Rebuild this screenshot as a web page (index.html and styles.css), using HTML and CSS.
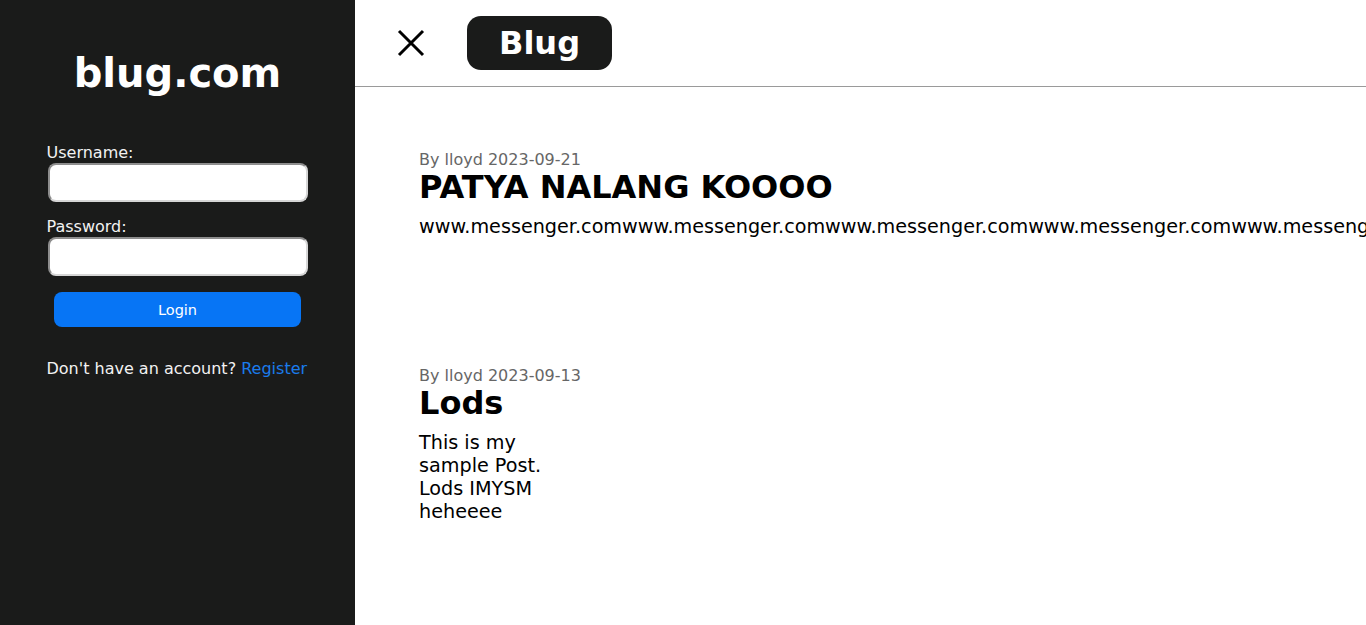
FILE: index.html
```html
<!DOCTYPE html>
<html lang="en">
<head>
<meta charset="utf-8">
<title>Blug</title>
<link rel="stylesheet" href="styles.css">
</head>
<body>
<div class="layout">
  <aside class="sidebar">
    <h1 class="brand">blug.com</h1>
    <form class="login-form">
      <label class="field-label" for="username">Username:</label>
      <input class="field-input" id="username" type="text">
      <label class="field-label gap-top" for="password">Password:</label>
      <input class="field-input" id="password" type="password">
      <button class="login-btn" type="button">Login</button>
      <p class="register">Don't have an account? <a class="register-link" href="#">Register</a></p>
    </form>
  </aside>
  <main class="main">
    <header class="topbar">
      <button class="close-btn" type="button" aria-label="Close">
        <svg width="28" height="28" viewBox="0 0 28 28"><path d="M2 2 L26 26 M26 2 L2 26" stroke="#000" stroke-width="3" fill="none"/></svg>
      </button>
      <div class="logo-pill">Blug</div>
    </header>
    <section class="posts">
      <article class="post">
        <div class="post-meta">By lloyd 2023-09-21</div>
        <h2 class="post-title">PATYA NALANG KOOOO</h2>
        <p class="post-body">www.messenger.comwww.messenger.comwww.messenger.comwww.messenger.comwww.messenger.com</p>
      </article>
      <article class="post post-next">
        <div class="post-meta">By lloyd 2023-09-13</div>
        <h2 class="post-title">Lods</h2>
        <p class="post-body narrow">This is my sample Post. Lods IMYSM heheeee</p>
      </article>
    </section>
  </main>
</div>
</body>
</html>
```
FILE: styles.css
```css
html, body {
  margin: 0;
  padding: 0;
  height: 100%;
  overflow: hidden;
  background: #ffffff;
  font-family: "DejaVu Sans", "Liberation Sans", sans-serif;
}

.layout {
  display: flex;
  height: 100vh;
}

.sidebar {
  width: 355px;
  flex: 0 0 355px;
  background: #1a1b1a;
  color: #f2f2f2;
  display: flex;
  flex-direction: column;
  align-items: center;
}

.brand {
  margin: 50px 0 0;
  font-size: 40px;
  line-height: 47px;
  font-weight: bold;
  color: #ffffff;
}

.login-form {
  width: 260px;
  margin-top: 46px;
  display: flex;
  flex-direction: column;
}

.field-label {
  font-size: 16px;
  line-height: 20px;
  color: #f2f2f2;
  margin-left: -1px;
}

.gap-top {
  margin-top: 15px;
}

.field-input {
  box-sizing: border-box;
  width: 260px;
  height: 39px;
  margin: 0;
  padding: 0 8px;
  background: #ffffff;
  border: 2px solid;
  border-color: #8e8e8e #d6d6d6 #d6d6d6 #8e8e8e;
  border-radius: 8px;
  font-size: 16px;
  font-family: inherit;
}

.login-btn {
  align-self: center;
  width: 247px;
  height: 35px;
  margin-top: 16px;
  border: none;
  border-radius: 8px;
  background: #0775f5;
  color: #ffffff;
  font-family: inherit;
  font-size: 14.5px;
  padding: 0;
}

.register {
  margin: 32px 0 0 -1px;
  font-size: 16px;
  line-height: 19px;
  color: #f2f2f2;
  white-space: nowrap;
}

.register-link {
  color: #1a7bec;
  text-decoration: none;
}

.main {
  flex: 1;
  min-width: 0;
  overflow: hidden;
  display: flex;
  flex-direction: column;
}

.topbar {
  height: 86px;
  flex: 0 0 86px;
  border-bottom: 1px solid #9a9a9a;
  display: flex;
  align-items: center;
  padding-left: 42px;
  gap: 42px;
}

.close-btn {
  width: 28px;
  height: 28px;
  padding: 0;
  margin: 0;
  border: none;
  background: none;
  display: flex;
}

.logo-pill {
  height: 54px;
  box-sizing: border-box;
  padding: 0 32px 0 32px;
  display: flex;
  align-items: center;
  background: #1a1b1a;
  color: #ffffff;
  border-radius: 14px;
  font-size: 32px;
  font-weight: bold;
}

.posts {
  padding: 63px 64px;
}

.post-next {
  margin-top: 128px;
}

.post-meta {
  font-size: 16px;
  line-height: 19px;
  color: #666666;
  white-space: nowrap;
}

.post-title {
  margin: 0;
  font-size: 32px;
  line-height: 37px;
  font-weight: bold;
  color: #000000;
  white-space: nowrap;
}

.post-body {
  margin: 9px 0 0;
  font-size: 19.2px;
  line-height: 23px;
  color: #000000;
}

.narrow {
  width: 165px;
}
```
